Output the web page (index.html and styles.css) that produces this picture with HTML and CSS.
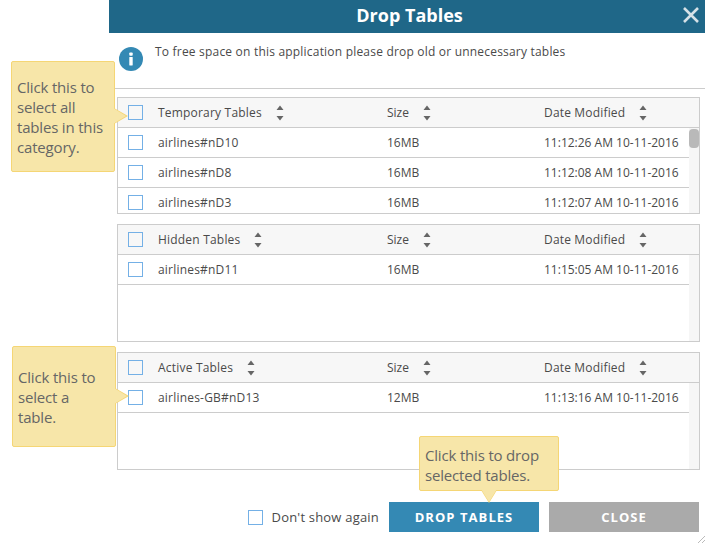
FILE: index.html
```html
<!DOCTYPE html>
<html lang="en">
<head>
<meta charset="UTF-8">
<meta name="viewport" content="width=device-width, initial-scale=1.0">
<title>Drop Tables</title>
<link rel="stylesheet" href="styles.css">
</head>
<body>
<svg class="sprite" width="0" height="0">
  <symbol id="sort" viewBox="0 0 8 16">
    <path d="M4 0.5L7.5 5H0.5Z M0.5 11H7.5L4 15.5Z"/>
  </symbol>
</svg>

<div class="dialog">
  <div class="dialog-header">
    <h1>Drop Tables</h1>
    <svg class="close-x" width="18" height="18" viewBox="0 0 18 18"><path d="M2 2L16 16M16 2L2 16"/></svg>
  </div>

  <div class="info">
    <svg class="info-icon" width="24" height="24" viewBox="0 0 24 24">
      <circle cx="12" cy="12" r="12"/>
      <rect x="10.3" y="5.5" width="3.4" height="3.2" rx="0.8"/>
      <rect x="10.3" y="10" width="3.4" height="8.5" rx="0.4"/>
    </svg>
    <p>To free space on this application please drop old or unnecessary tables</p>
  </div>

  <div class="panels">
    <!-- temporary -->
    <div class="panel panel-short">
      <div class="row head">
        <span class="check"></span>
        <span class="col-name">Temporary Tables<svg class="sort"><use href="#sort"/></svg></span>
        <span class="col-size">Size<svg class="sort"><use href="#sort"/></svg></span>
        <span class="col-date">Date Modified<svg class="sort"><use href="#sort"/></svg></span>
      </div>
      <div class="panel-body">
        <div class="rows">
          <div class="row">
            <span class="check"></span>
            <span class="col-name">airlines#nD10</span>
            <span class="col-size">16MB</span>
            <span class="col-date">11:12:26 AM 10-11-2016</span>
          </div>
          <div class="row">
            <span class="check"></span>
            <span class="col-name">airlines#nD8</span>
            <span class="col-size">16MB</span>
            <span class="col-date">11:12:08 AM 10-11-2016</span>
          </div>
          <div class="row">
            <span class="check"></span>
            <span class="col-name">airlines#nD3</span>
            <span class="col-size">16MB</span>
            <span class="col-date">11:12:07 AM 10-11-2016</span>
          </div>
        </div>
        <div class="scrollbar"><div class="thumb"></div></div>
      </div>
    </div>

    <!-- hidden -->
    <div class="panel">
      <div class="row head">
        <span class="check"></span>
        <span class="col-name">Hidden Tables<svg class="sort"><use href="#sort"/></svg></span>
        <span class="col-size">Size<svg class="sort"><use href="#sort"/></svg></span>
        <span class="col-date">Date Modified<svg class="sort"><use href="#sort"/></svg></span>
      </div>
      <div class="panel-body">
        <div class="rows">
          <div class="row">
            <span class="check"></span>
            <span class="col-name">airlines#nD11</span>
            <span class="col-size">16MB</span>
            <span class="col-date">11:15:05 AM 10-11-2016</span>
          </div>
        </div>
        <div class="scrollbar"></div>
      </div>
    </div>

    <!-- active -->
    <div class="panel">
      <div class="row head">
        <span class="check"></span>
        <span class="col-name">Active Tables<svg class="sort"><use href="#sort"/></svg></span>
        <span class="col-size">Size<svg class="sort"><use href="#sort"/></svg></span>
        <span class="col-date">Date Modified<svg class="sort"><use href="#sort"/></svg></span>
      </div>
      <div class="panel-body">
        <div class="rows">
          <div class="row">
            <span class="check"></span>
            <span class="col-name">airlines-GB#nD13</span>
            <span class="col-size">12MB</span>
            <span class="col-date">11:13:16 AM 10-11-2016</span>
          </div>
        </div>
        <div class="scrollbar"></div>
      </div>
    </div>
  </div>

  <div class="footer">
    <span class="check"></span>
    <span class="dont-show">Don't show again</span>
    <button class="btn btn-drop">DROP TABLES</button>
    <button class="btn btn-close">CLOSE</button>
  </div>
</div>

<div class="tip tip-all">Click this to<br>select all<br>tables in this<br>category.</div>
<div class="tip tip-one">Click this to<br>select a<br>table.</div>
<div class="tip tip-drop">Click this to drop<br>selected tables.</div>

<svg class="grip" width="7" height="7" viewBox="0 0 7 7"><path d="M0 7L7 0M4 7L7 4"/></svg>
</body>
</html>
```

FILE: styles.css
```css
html, body {
  height: 100%;
}
body {
  margin: 0;
  padding: 0;
  position: relative;
  overflow: hidden;
  font-family: "Open Sans", Arial, sans-serif;
  background-color: #fff;
  color: #4a4a4a;
}
.sprite {
  position: absolute;
}
.dialog {
  margin-left: 109px;
  width: 596px;
}
.dialog-header {
  position: relative;
  height: 33px;
  background-color: #1f6788;
  text-align: center;
}
.dialog-header h1 {
  margin: 0;
  padding-left: 5px;
  font-size: 18px;
  line-height: 31px;
  font-weight: 700;
  color: #fff;
}
.close-x {
  position: absolute;
  top: 6px;
  right: 5px;
}
.close-x path {
  stroke: #d5e1e7;
  stroke-width: 2.6;
  fill: none;
}
.info {
  display: flex;
  height: 55px;
  padding-left: 10px;
  border-bottom: 1px solid #ccc;
}
.info-icon {
  margin-top: 14px;
  flex: none;
}
.info-icon circle {
  fill: #3489b4;
}
.info-icon rect {
  fill: #fff;
}
.info p {
  margin: 10px 0 0 12px;
  font-size: 12px;
  line-height: 18px;
  letter-spacing: 0.2px;
}
.panels {
  display: flex;
  flex-direction: column;
  gap: 10px;
  margin: 8px 5px 0 8px;
}
.panel {
  display: flex;
  flex-direction: column;
  height: 118px;
  box-sizing: border-box;
  border: 1px solid #ccc;
  overflow: hidden;
}
.panel-short {
  height: 117px;
}
.panel-body {
  display: flex;
  flex: 1;
  min-height: 0;
}
.rows {
  flex: 1;
  min-width: 0;
}
.scrollbar {
  flex: none;
  width: 10px;
  background-color: #f6f6f6;
}
.thumb {
  height: 19px;
  margin-top: 1px;
  border-radius: 4px;
  background-color: #b9b9b9;
}
.row {
  display: flex;
  align-items: center;
  height: 30px;
  box-sizing: border-box;
  border-bottom: 1px solid #ccc;
  padding-left: 10px;
  font-size: 12px;
}
.head {
  flex: none;
  background-color: #f7f7f7;
}
.check {
  flex: none;
  width: 15px;
  height: 15px;
  box-sizing: border-box;
  border: 1px solid #74b0e6;
  background-color: #fff;
}
.head .check {
  background-color: #f7f7f7;
}
.col-name {
  display: flex;
  align-items: center;
  width: 229px;
  margin-left: 15px;
  letter-spacing: 0.2px;
}
.col-size {
  display: flex;
  align-items: center;
  width: 157px;
}
.col-date {
  display: flex;
  align-items: center;
  white-space: nowrap;
}
.head .col-date {
  letter-spacing: 0.17px;
}
.sort {
  width: 8px;
  height: 16px;
  margin-left: 14px;
  fill: #666;
}
.footer {
  display: flex;
  align-items: center;
  height: 30px;
  margin: 32px 6px 0 0;
  justify-content: flex-end;
}
.dont-show {
  margin: 0 10px 0 9px;
  font-size: 13px;
  letter-spacing: 0.2px;
}
.btn {
  width: 150px;
  height: 30px;
  padding: 0;
  border: none;
  font-family: inherit;
  font-size: 13px;
  font-weight: 700;
  letter-spacing: 1.05px;
  color: #fff;
}
.btn-drop {
  background-color: #3489b4;
}
.btn-close {
  margin-left: 10px;
  background-color: #aaa;
}
.tip {
  position: absolute;
  box-sizing: border-box;
  background-color: #f7e6a9;
  border: 1px solid #f5d675;
  border-radius: 2px;
  font-size: 15px;
  line-height: 20px;
  letter-spacing: -0.18px;
  color: #666;
}
.tip::before,
.tip::after {
  content: "";
  position: absolute;
  width: 0;
  height: 0;
  border-style: solid;
  border-color: transparent;
}
.tip-all {
  left: 11px;
  top: 61px;
  width: 104px;
  height: 111px;
  padding: 15px 0 0 5px;
}
.tip-one {
  left: 12px;
  top: 346px;
  width: 104px;
  height: 101px;
  padding: 20px 0 0 5px;
}
.tip-all::before,
.tip-one::before {
  left: 102px;
  border-width: 8px 0 8px 14px;
  border-left-color: #f5d675;
}
.tip-all::after,
.tip-one::after {
  left: 101px;
  border-width: 8px 0 8px 13px;
  border-left-color: #f7e6a9;
}
.tip-all::before,
.tip-all::after {
  top: 46px;
}
.tip-one::before,
.tip-one::after {
  top: 41px;
}
.tip-drop {
  left: 419px;
  top: 436px;
  width: 140px;
  height: 55px;
  padding: 8px 0 0 5px;
}
.tip-drop::before,
.tip-drop::after {
  left: 61px;
  border-width: 13px 8px 0 8px;
}
.tip-drop::before {
  top: 53px;
  border-top-color: #f5d675;
}
.tip-drop::after {
  top: 52px;
  border-top-color: #f7e6a9;
}
.grip {
  position: absolute;
  right: 0;
  bottom: 0;
}
.grip path {
  stroke: #bbb;
  fill: none;
}
```
